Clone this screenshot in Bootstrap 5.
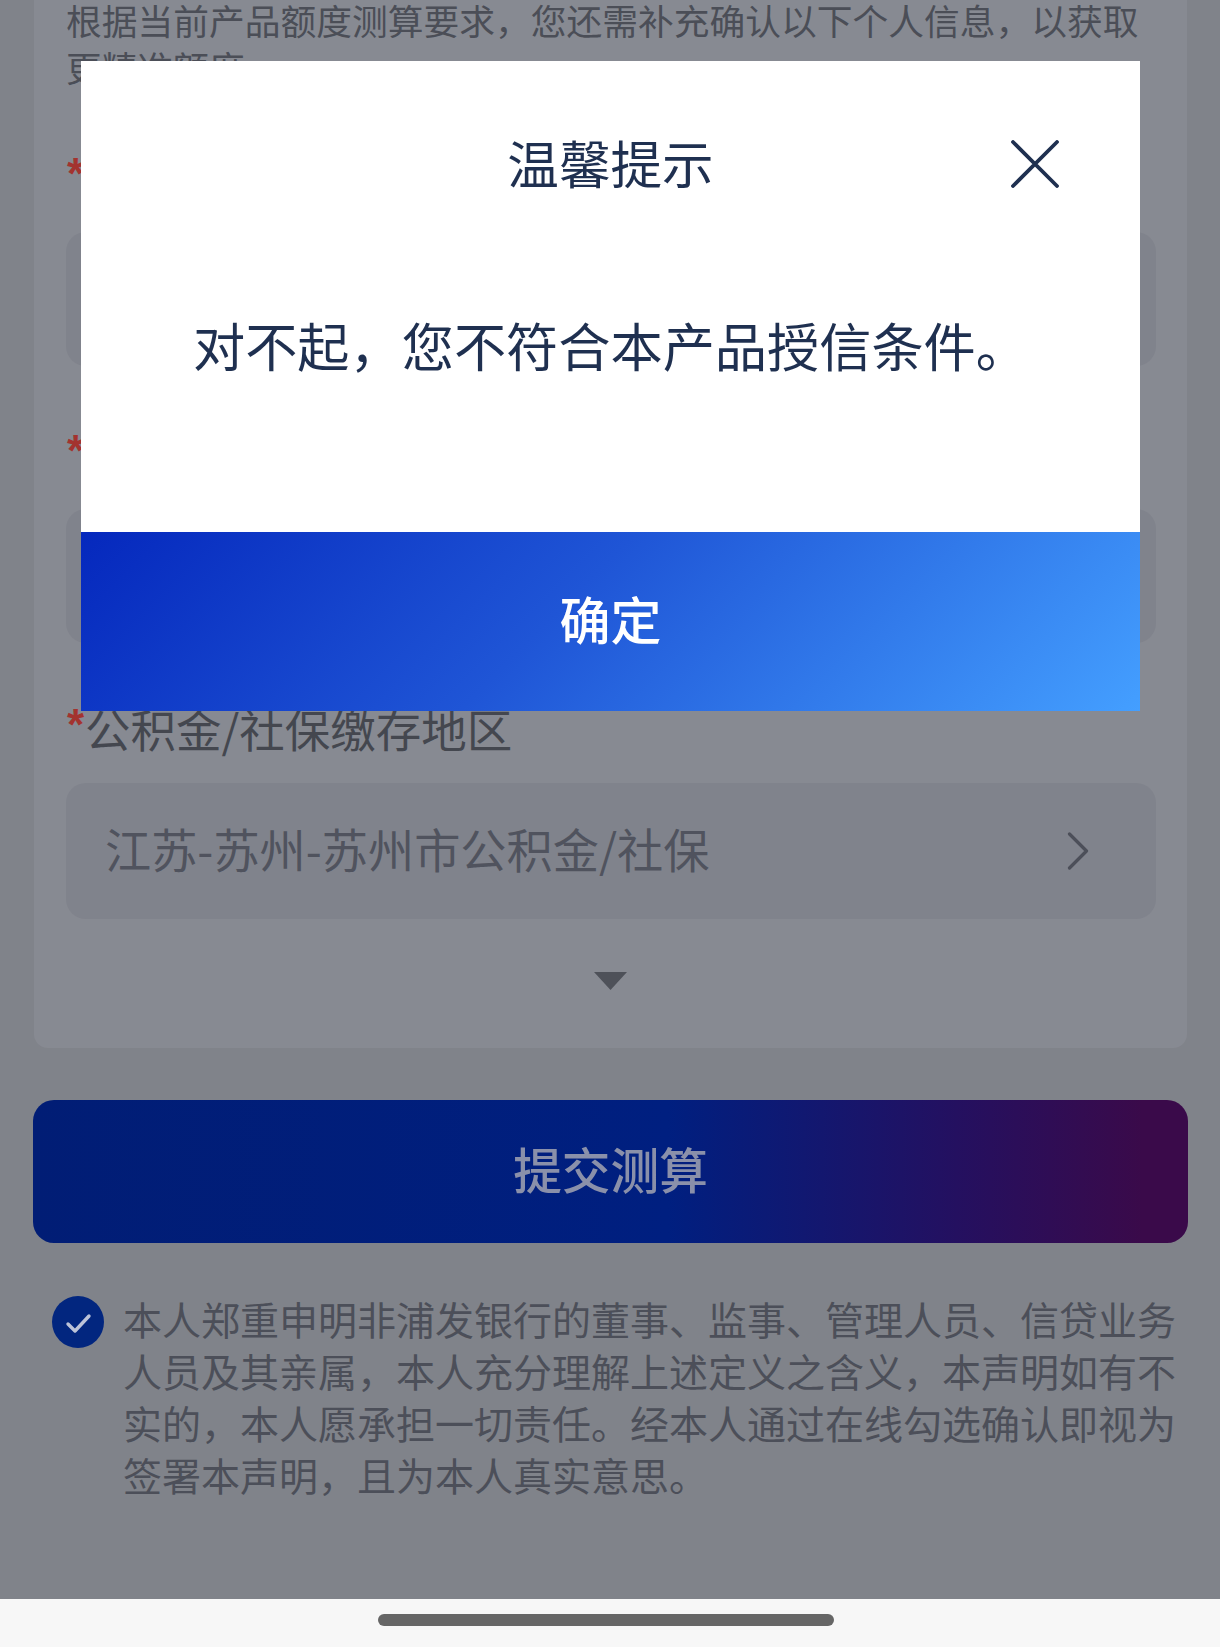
<!DOCTYPE html>
<html lang="zh-CN">
<head>
<meta charset="utf-8">
<title>温馨提示</title>
<link href="https://cdn.jsdelivr.net/npm/bootstrap@5.3.0/dist/css/bootstrap.min.css" rel="stylesheet">
<style>
html,body{margin:0;height:100%;}
body{font-family:"Noto Sans CJK SC","Liberation Sans",sans-serif;background:#f7f7f7;width:1220px;height:1647px;overflow:hidden;position:relative;}
.dim-page{height:1599px;background:#80838a;padding:0 33px 0 34px;overflow:hidden;}
.form-panel{margin-top:-20px;padding:16px 31px 0 32px;height:1068px;background:#878a92;border-radius:14px;}
.intro-text{font-size:35.75px;line-height:47px;color:#4b4e57;margin:0 0 66px;}
.fld-label{height:47px;font-size:45.5px;line-height:47px;color:#44474f;margin-bottom:29px;display:flex;transform:translateY(-2px);}
.req-star{width:18px;margin-left:1px;flex:none;color:#a3332f;font-size:44px;font-weight:700;line-height:47px;font-family:"Liberation Sans",sans-serif;margin-top:-4px;}
.fld-box{height:134px;background:#80838c;border-radius:20px;padding:0 67px 6px 39px;font-size:46.2px;color:#50535e;}
.fld-box svg{margin-top:6px;}
.fld-group{margin-bottom:64px;}
.fld-group.first-one{margin-bottom:67px;}
.fld-group.last-one{margin-bottom:0;}
.fld-group.last-one .fld-box{height:136px;}
.more-arrow{margin-top:53px;padding-right:2px;}
.submit-btn{margin:52px -1px 0;width:calc(100% + 2px);height:143px;border:0;border-radius:21px;padding-bottom:12px;background:linear-gradient(90deg,#011d75 0%,#001f80 55%,#241060 80%,#3a0a4a 96%);color:#8a90aa;font-size:48.7px;font-weight:500;}
.submit-btn:hover,.submit-btn:active{background:linear-gradient(90deg,#011d75 0%,#001f80 55%,#241060 80%,#3a0a4a 96%);color:#8a90aa;}
.pledge-row{margin-top:52px;padding-left:18px;gap:19px;}
.pledge-tick{width:52px;height:52px;margin-top:1px;}
.pledge-text{width:1056px;font-size:39px;line-height:52px;color:#4c4f59;margin:-3px 0 0;}
.home-strip{height:48px;background:#f7f7f7;padding-top:15px;}
.home-pill{width:456px;height:12px;background:#666;border-radius:6px;margin-left:378px;}
.tip-dialog{position:absolute;left:81px;top:61px;width:1059px;background:#fff;}
.tip-head{display:grid;grid-template-columns:1fr auto 1fr;align-items:center;height:206px;padding:0 81px;}
.tip-title{font-size:51.6px;line-height:60px;color:#1f3050;margin:-4px 0 0;font-weight:400;}
.tip-close{justify-self:end;background:none;border:0;padding:0;line-height:0;}
.tip-body{height:265px;padding-top:47px;font-size:52.2px;line-height:60px;color:#1f3050;text-align:center;}
.tip-ok{display:block;width:100%;height:179px;border:0;border-radius:0;padding-bottom:12px;background:linear-gradient(135deg,#0528bd 0%,#1f55d6 45%,#449fff 100%);color:#fff;font-size:51px;font-weight:500;}
.tip-ok:hover,.tip-ok:active{background:linear-gradient(135deg,#0528bd 0%,#1f55d6 45%,#449fff 100%);color:#fff;}
</style>
</head>
<body>
<div class="dim-page">
  <div class="form-panel">
    <p class="intro-text">根据当前产品额度测算要求，您还需补充确认以下个人信息，以获取更精准额度</p>
    <div class="fld-group first-one">
      <div class="fld-label"><span class="req-star">*</span></div>
      <div class="fld-box d-flex align-items-center justify-content-between"></div>
    </div>
    <div class="fld-group">
      <div class="fld-label"><span class="req-star">*</span></div>
      <div class="fld-box d-flex align-items-center justify-content-between"></div>
    </div>
    <div class="fld-group last-one">
      <div class="fld-label"><span class="req-star">*</span>公积金/社保缴存地区</div>
      <div class="fld-box d-flex align-items-center justify-content-between">
        <span>江苏-苏州-苏州市公积金/社保</span>
        <svg width="22" height="38" viewBox="0 0 22 38" fill="none" stroke="#4c4f59" stroke-width="3.2" stroke-linecap="round" stroke-linejoin="round"><path d="M2.5 2 19.5 19 2.5 36"/></svg>
      </div>
    </div>
    <div class="more-arrow d-flex justify-content-center">
      <svg width="33" height="18" viewBox="0 0 33 18"><path d="M0 0H33L16.5 18Z" fill="#4e5159"/></svg>
    </div>
  </div>
  <button type="button" class="btn submit-btn">提交测算</button>
  <div class="pledge-row d-flex align-items-start">
    <svg class="pledge-tick flex-shrink-0" viewBox="0 0 52 52"><circle cx="26" cy="26" r="26" fill="#02267f"/><path d="M16 28 23 35 37 20" fill="none" stroke="#bcc3d8" stroke-width="3.4" stroke-linecap="round" stroke-linejoin="round"/></svg>
    <p class="pledge-text">本人郑重申明非浦发银行的董事、监事、管理人员、信贷业务人员及其亲属，本人充分理解上述定义之含义，本声明如有不实的，本人愿承担一切责任。经本人通过在线勾选确认即视为签署本声明，且为本人真实意思。</p>
  </div>
</div>
<div class="home-strip"><div class="home-pill"></div></div>

<div class="tip-dialog">
  <div class="tip-head">
    <span></span>
    <h5 class="tip-title">温馨提示</h5>
    <button type="button" class="tip-close" aria-label="关闭">
      <svg width="48" height="48" viewBox="0 0 48 48" stroke="#1f3050" stroke-width="3.8" stroke-linecap="round"><path d="M2 2 46 46M46 2 2 46"/></svg>
    </button>
  </div>
  <div class="tip-body">对不起，您不符合本产品授信条件。</div>
  <button type="button" class="btn tip-ok">确定</button>
</div>
<script src="https://cdn.jsdelivr.net/npm/bootstrap@5.3.0/dist/js/bootstrap.bundle.min.js"></script>
</body>
</html>
